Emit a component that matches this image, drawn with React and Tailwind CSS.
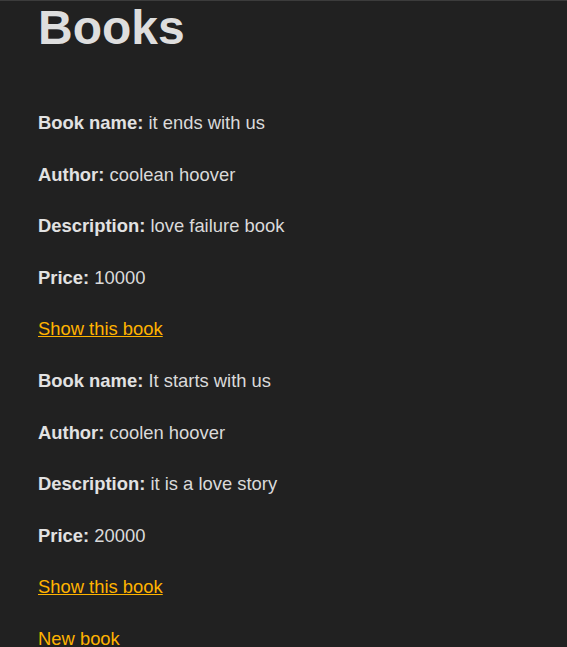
export default function App() {
  const books = [
    { name: "it ends with us", author: "coolean hoover", desc: "love failure book", price: "10000" },
    { name: "It starts with us", author: "coolen hoover", desc: "it is a love story", price: "20000" },
  ];
  return (
    <div
      className="min-h-[647px] bg-[#212121] border-t border-[#3c3c3c] text-[#dadada] pl-[38px] overflow-hidden"
      style={{ fontFamily: '"Liberation Sans", Arial, sans-serif' }}
    >
      <h1 className="text-[48px] font-bold leading-[55px] text-[#dedede] -mt-px">Books</h1>
      <div className="flex flex-col gap-[24.1px] mt-[54px] text-[18.4px] leading-[27.5px]">
        {books.map((b, i) => (
          <div key={i} className="flex flex-col gap-[24.1px]">
            <p><strong className="font-bold text-[#e2e2e2]">Book name:</strong> {b.name}</p>
            <p><strong className="font-bold text-[#e2e2e2]">Author:</strong> {b.author}</p>
            <p><strong className="font-bold text-[#e2e2e2]">Description:</strong> {b.desc}</p>
            <p><strong className="font-bold text-[#e2e2e2]">Price:</strong> {b.price}</p>
            <p><a href="#" className="text-[#ffb300] underline">Show this book</a></p>
          </div>
        ))}
        <p><a href="#" className="text-[#ffb300]">New book</a></p>
      </div>
    </div>
  );
}
